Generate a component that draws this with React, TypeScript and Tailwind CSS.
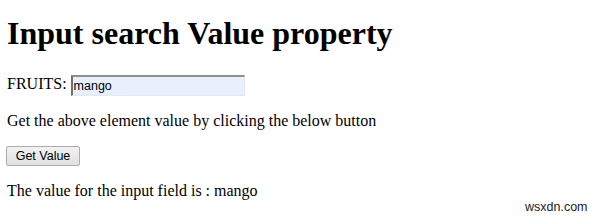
import { useState } from "react";

export default function App() {
  const [fruit, setFruit] = useState("mango");
  const [result, setResult] = useState("mango");

  return (
    <div className="relative w-[599px] h-[217px] bg-white overflow-hidden">
      <div className="pl-[7px] pt-[15px] text-black font-['Liberation_Serif',serif]">
        <h1 className="text-[32px] leading-[36px] font-bold">Input search Value property</h1>

        {/* Search field row */}
        <div className="mt-[24px] flex items-start h-[21px]">
          <span className="text-[16px] leading-[18px]">FRUITS:</span>
          <input
            type="text"
            value={fruit}
            onChange={(e) => setFruit(e.target.value)}
            className="ml-[4px] w-[174px] h-[21px] px-[1px] bg-[#e8f0fe] border-t-2 border-l-2 border-r border-b border-t-[#8f8f8f] border-l-[#6f6f6f] border-r-[#e3e9ef] border-b-[#e3e9ef] text-[12.5px] text-black font-['Liberation_Sans',sans-serif] outline-none"
          />
        </div>

        <p className="mt-[16px] text-[16px] leading-[18px]">
          Get the above element value by clicking the below button
        </p>

        <button
          onClick={() => setResult(fruit)}
          className="mt-[16px] ml-[-1px] block w-[74px] h-[20px] rounded-[2px] border border-[#adadad] bg-gradient-to-b from-[#f2f2f2] to-[#e0e0e0] text-[12.5px] leading-[18px] text-black font-['Liberation_Sans',sans-serif]"
        >
          Get Value
        </button>

        <p className="mt-[16px] text-[16px] leading-[18px]">
          The value for the input field is : {result}
        </p>
      </div>

      {/* watermark */}
      <span className="absolute top-[200px] left-[525px] text-[12.5px] leading-[14px] text-[#222] font-['Liberation_Sans',sans-serif]">
        wsxdn.com
      </span>
    </div>
  );
}
